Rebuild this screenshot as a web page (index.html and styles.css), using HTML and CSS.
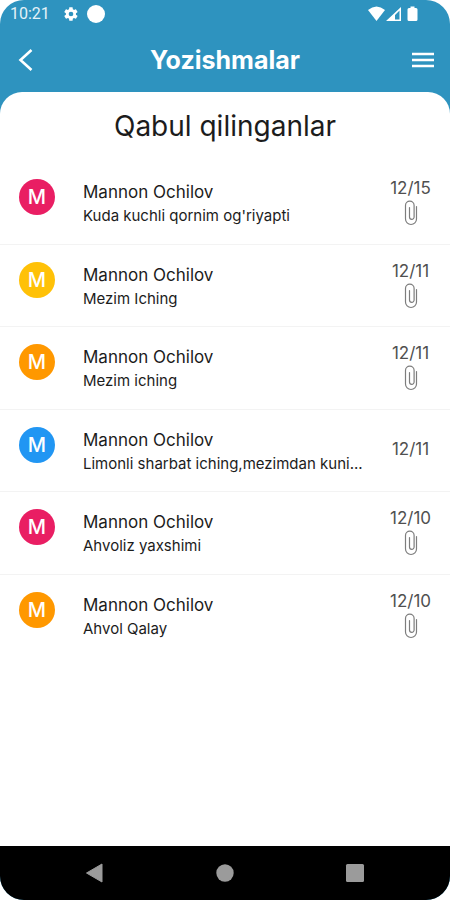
FILE: index.html
```html
<!DOCTYPE html>
<html lang="uz">
<head>
<meta charset="utf-8">
<meta name="viewport" content="width=device-width, initial-scale=1">
<title>Yozishmalar</title>
<link rel="stylesheet" href="styles.css">
</head>
<body>
<svg hidden>
  <symbol id="clip" viewBox="0 0 16 28">
    <path d="M13.500 7.500V20a5.500 5.500 0 0 1-11 0V6.500a4.300 4.300 0 0 1 8.600 0V18a2.300 2.300 0 0 1-4.600 0V8.500" fill="none" stroke="#7d7d7d" stroke-width="1.200" stroke-linecap="round"/>
  </symbol>
</svg>
<div class="phone">
  <div class="status">
    <span class="clock">10:21</span>
    <svg class="gear" width="16" height="16" viewBox="0 0 24 24" aria-hidden="true"><path fill="#fff" fill-rule="evenodd" d="M19.400 13c.1-.6.1-1.400 0-2l2.200-1.700c.2-.2.200-.4.100-.6l-2.100-3.600c-.1-.2-.4-.3-.6-.2l-2.500 1c-.5-.4-1.100-.7-1.700-1l-.4-2.600c0-.3-.2-.4-.5-.4h-4c-.3 0-.5.1-.5.4L9 4.900c-.6.300-1.200.6-1.700 1l-2.500-1c-.2-.1-.5 0-.6.200L2.100 8.700c-.1.200-.1.400.1.600L4.400 11c-.1.600-.1 1.400 0 2l-2.200 1.700c-.2.200-.2.400-.1.600l2.100 3.600c.1.200.4.300.6.200l2.500-1c.5.400 1.100.7 1.700 1l.4 2.600c0 .3.200.4.500.4h4c.3 0 .5-.1.500-.4l.4-2.600c.6-.3 1.200-.6 1.700-1l2.500 1c.2.100.5 0 .6-.2l2.100-3.600c.1-.2.1-.4-.1-.6zM12 15.500a3.500 3.500 0 1 1 0-7 3.500 3.500 0 0 1 0 7z"/></svg>
    <span class="notice"></span>
    <svg class="signals" width="52" height="16" viewBox="0 0 52 16" aria-hidden="true">
      <path fill="#fff" d="M1 4Q9.500-3 18 4L9.500 15z"/>
      <path fill="#fff" fill-rule="evenodd" d="M19 15L34 1v14zM28 13.500V9L32.500 4.500v9z"/>
      <path fill="#fff" d="M43.500 2V.5h4V2h1.500q1.500 0 1.500 1.500v10q0 1.500-1.500 1.500h-7q-1.500 0-1.500-1.500v-10Q40.500 2 42 2z"/>
    </svg>
  </div>
  <header class="bar">
    <button class="tool" aria-label="Orqaga"><svg width="20" height="24" viewBox="0 0 20 24"><path d="M15.500 2L4.500 12l11 10" fill="none" stroke="#fff" stroke-width="2.600"/></svg></button>
    <h1>Yozishmalar</h1>
    <button class="tool end" aria-label="Menyu"><svg width="22" height="16" viewBox="0 0 22 16"><path d="M0 2h22M0 8h22M0 14h22" stroke="#fff" stroke-width="2.400"/></svg></button>
  </header>
  <main class="panel">
    <h2>Qabul qilinganlar</h2>
    <ul class="list">
      <li><span class="avatar pink">M</span><div class="message"><h3>Mannon Ochilov</h3><p>Kuda kuchli qornim og'riyapti</p></div><div class="meta"><time>12/15</time><svg class="clip"><use href="#clip"/></svg></div></li>
      <li><span class="avatar amber">M</span><div class="message"><h3>Mannon Ochilov</h3><p>Mezim Iching</p></div><div class="meta"><time>12/11</time><svg class="clip"><use href="#clip"/></svg></div></li>
      <li><span class="avatar orange">M</span><div class="message"><h3>Mannon Ochilov</h3><p>Mezim iching</p></div><div class="meta"><time>12/11</time><svg class="clip"><use href="#clip"/></svg></div></li>
      <li><span class="avatar blue">M</span><div class="message"><h3>Mannon Ochilov</h3><p>Limonli sharbat iching,mezimdan kuni...</p></div><div class="meta"><time>12/11</time></div></li>
      <li><span class="avatar pink">M</span><div class="message"><h3>Mannon Ochilov</h3><p>Ahvoliz yaxshimi</p></div><div class="meta"><time>12/10</time><svg class="clip"><use href="#clip"/></svg></div></li>
      <li><span class="avatar orange">M</span><div class="message"><h3>Mannon Ochilov</h3><p>Ahvol Qalay</p></div><div class="meta"><time>12/10</time><svg class="clip"><use href="#clip"/></svg></div></li>
    </ul>
  </main>
  <nav class="system">
    <button aria-label="Back"><svg width="20" height="20" viewBox="0 0 20 20"><path d="M17 1v18L1.500 10z" fill="#9b9b9b" stroke="#9b9b9b" stroke-linejoin="round"/></svg></button>
    <button aria-label="Home"><svg width="20" height="20" viewBox="0 0 20 20"><circle cx="10" cy="10" r="8.700" fill="#9b9b9b"/></svg></button>
    <button aria-label="Recent"><svg width="20" height="20" viewBox="0 0 20 20"><rect x="1" y="1" width="18" height="18" rx="1.500" fill="#9b9b9b"/></svg></button>
  </nav>
</div>
</body>
</html>
```
FILE: styles.css
```css
* { box-sizing: border-box; margin: 0; padding: 0; }
body { background: #fff; color: #1c1c1c; font-family: Inter, "Liberation Sans", sans-serif; }
button { display: flex; align-items: center; justify-content: center; border: 0; background: none; cursor: pointer; }
svg { display: block; }
svg[hidden] { display: none; }

.phone {
  display: flex;
  flex-direction: column;
  min-height: 100vh;
  border-radius: 24px;
  overflow: hidden;
  background: #2e93bf;
}

.status { display: flex; align-items: center; height: 28px; padding: 0 31px 0 10px; }
.clock { color: #e4f2f8; font: 16px/28px Roboto, sans-serif; }
.gear { margin-left: 13px; }
.notice { width: 18px; height: 18px; margin-left: 8px; border-radius: 50%; background: #fff; }
.signals { margin-left: auto; }

.bar { display: grid; grid-template-columns: 48px 1fr 48px; align-items: center; height: 64px; padding: 0 16px; }
.bar h1 { color: #fff; font-size: 25px; line-height: 32px; font-weight: 700; text-align: center; }
.tool { height: 40px; justify-content: flex-start; }
.tool.end { justify-content: flex-end; }

.panel { flex: 1; border-radius: 22px 22px 0 0; background: #fff; }
.panel h2 { padding: 16px 0 18px; font-size: 28px; line-height: 36px; font-weight: 400; text-align: center; }

.list { display: grid; grid-template-rows: repeat(6, 1fr); min-height: 495px; list-style: none; }
.list li { display: flex; padding: 16px 18px 0 19px; border-bottom: 1px solid #f3f3f3; }
.list li:last-child { border-bottom: 0; }
.avatar {
  flex: none;
  width: 36px;
  height: 36px;
  margin-top: 1px;
  border-radius: 50%;
  color: #fff;
  font-size: 20px;
  line-height: 36px;
  font-weight: 500;
  text-align: center;
}
.pink { background: #e91e63; }
.amber { background: #ffc107; }
.orange { background: #ff9800; }
.blue { background: #2196f3; }

.message { flex: 1; min-width: 0; margin-left: 28px; }
.message h3 { font-size: 17px; line-height: 28px; font-weight: 400; }
.message p { font-size: 15px; line-height: 20px; white-space: nowrap; }

.meta { display: flex; flex-direction: column; align-items: center; flex: none; width: 43px; }
.meta time { color: #505050; font-size: 17px; line-height: 20px; }
.meta time:only-child { margin: auto 0; padding-bottom: 18px; }
.clip { width: 16px; height: 28px; margin-top: 1px; }

.system {
  display: flex;
  align-items: center;
  justify-content: space-between;
  height: 54px;
  padding: 0 85px;
  background: #000;
}
```
